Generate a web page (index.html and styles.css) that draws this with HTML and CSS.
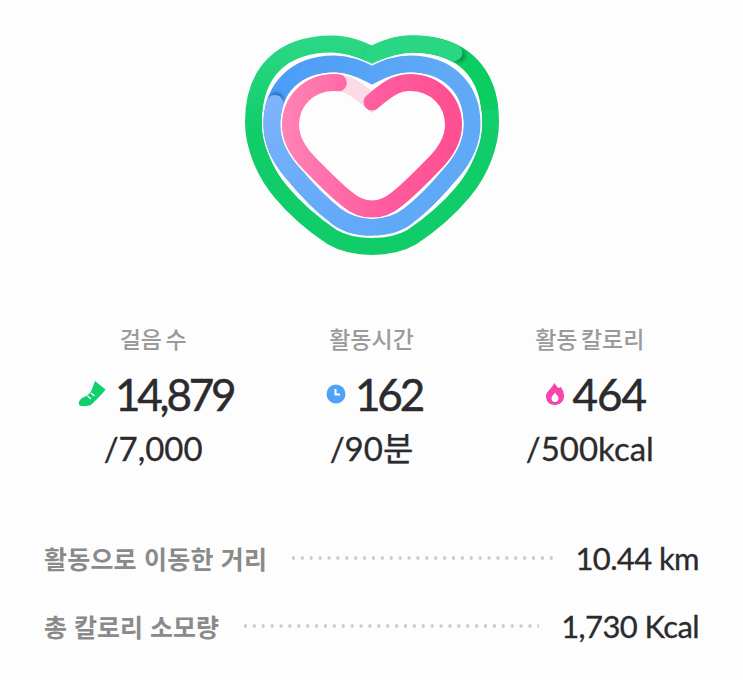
FILE: index.html
```html
<!DOCTYPE html>
<html lang="ko">
<head>
<meta charset="utf-8">
<title>활동</title>
<link rel="stylesheet" href="styles.css">
</head>
<body>
<main class="page">
  <div class="heart-wrap">
    <svg class="heart" viewBox="232 24 280 244" width="280" height="244" aria-hidden="true">
      <defs>
        <linearGradient id="greenTop" gradientUnits="userSpaceOnUse" x1="0" y1="40" x2="0" y2="130">
          <stop offset="0" stop-color="#2bd785"/><stop offset="1" stop-color="#10cd69"/>
        </linearGradient>
        <linearGradient id="blueBase" gradientUnits="userSpaceOnUse" x1="270" y1="60" x2="420" y2="120">
          <stop offset="0" stop-color="#4a9cf6"/><stop offset="1" stop-color="#60a9f7"/>
        </linearGradient>
        <linearGradient id="blueLight" gradientUnits="userSpaceOnUse" x1="0" y1="90" x2="0" y2="225">
          <stop offset="0" stop-color="#80b4fa"/><stop offset="1" stop-color="#62a9f8"/>
        </linearGradient>
        <linearGradient id="pinkGrad" gradientUnits="userSpaceOnUse" x1="285" y1="0" x2="455" y2="0">
          <stop offset="0" stop-color="#ff82b4"/><stop offset="0.55" stop-color="#ff5c9f"/><stop offset="1" stop-color="#fd4f92"/>
        </linearGradient>
        <path id="greenPath" pathLength="100" d="M372 55 C384 49 396 44 412 44 C462 44 490.5 72 490.5 122 C490.5 145 480 172 463 192 C448 210 430 225 412 237 C400 244 386 246.5 372 246.5 C358 246.5 344 244 332 237 C314 225 296 210 281 192 C264 172 253.5 145 253.5 122 C253.5 72 282 44 332 44 C348 44 360 49 372 55 Z"/>
        <path id="bluePath" pathLength="100" d="M372 75 C385 68 397 64 410 64 C448 64 472 88 472 124 C472 142 464 158 452 172 C438 189 424 204 408 216 C398 224 385 227 372 227 C359 227 346 224 336 216 C320 204 306 189 292 172 C280 158 272 142 272 124 C272 88 296 64 334 64 C347 64 359 68 372 75 Z"/>
        <path id="pinkPath" pathLength="100" d="M372 102 C385 91 395 82.5 410 82.5 C435 82.5 453.5 101 453.5 125 C453.5 140 445 153 434 164 C422 176 410 189 397 199 C389 206 381 209 372 209 C363 209 355 206 347 199 C334 189 322 176 310 164 C299 153 290.5 140 290.5 125 C290.5 101 309 82.5 334 82.5 C349 82.5 359 91 372 102 Z"/>
      </defs>
      <use href="#greenPath" class="ring ring-green"/>
      <use href="#greenPath" class="ring ring-green-solid"/>
      <use href="#greenPath" class="cap-shadow shadow-green"/>
      <use href="#greenPath" class="ring ring-green-cap"/>

      <use href="#bluePath" class="halo"/>
      <use href="#bluePath" class="ring ring-blue"/>
      <use href="#bluePath" class="cap-shadow shadow-blue"/>
      <use href="#bluePath" class="ring ring-blue-cap"/>

      <use href="#pinkPath" class="halo"/>
      <use href="#pinkPath" class="ring ring-pink-bg"/>
      <use href="#pinkPath" class="ring ring-pink"/>
    </svg>
  </div>

  <section class="stats">
    <div class="stat">
      <div class="stat-label">걸음 수</div>
      <div class="stat-value">
        <svg class="icon icon-shoe" viewBox="0 0 28 26" width="28" height="26" aria-hidden="true">
          <path class="shoe-fill" d="M17 0 L27.500 8.500 Q25 12 22 15 L15 22 Q13 25 8 25 L4 25 Q0 25 1 21 Q2 17.500 6 16 Q12 14 14 8 Z"/>
          <path class="shoe-lace" d="M9.500 15 L13 18 M13 12 L16.500 15"/>
        </svg>
        <span class="num">14,879</span>
      </div>
      <div class="stat-goal">/7,000</div>
    </div>
    <div class="stat">
      <div class="stat-label">활동시간</div>
      <div class="stat-value">
        <svg class="icon icon-clock" viewBox="0 0 20 20" width="20" height="20" aria-hidden="true">
          <circle class="clock-face" cx="10" cy="10" r="9.500"/>
          <path class="clock-hand" d="M9.500 5 V10.500 H14"/>
        </svg>
        <span class="num">162</span>
      </div>
      <div class="stat-goal">/90분</div>
    </div>
    <div class="stat">
      <div class="stat-label">활동 칼로리</div>
      <div class="stat-value stat-value-shift">
        <svg class="icon icon-flame" viewBox="0 0 18 22" width="18" height="22" aria-hidden="true">
          <path class="flame-fill" d="M8.500 0 C10 3 12 5 13.500 5 C13.800 4.500 14 4.200 14.300 3.800 C16.500 6 18 9 18 13 C18 18.500 14 22 9 22 C4 22 0 18.500 0 13.500 C0 8 5.500 6 8.500 0 Z"/>
          <path class="flame-core" d="M9 9.500 C10.500 12 12.500 13 12.500 15.500 C12.500 17.500 11 19 9 19 C7 19 5.500 17.500 5.500 15.500 C5.500 13 7.500 12 9 9.500 Z"/>
        </svg>
        <span class="num num-wide">464</span>
      </div>
      <div class="stat-goal">/500kcal</div>
    </div>
  </section>

  <section class="rows">
    <div class="row">
      <span class="row-label row-label-wide">활동으로 이동한 거리</span>
      <span class="dots"></span>
      <span class="row-value">10.44 km</span>
    </div>
    <div class="row">
      <span class="row-label">총 칼로리 소모량</span>
      <span class="dots"></span>
      <span class="row-value">1,730 Kcal</span>
    </div>
  </section>
</main>
</body>
</html>
```
FILE: styles.css
```css
html, body {
  margin: 0;
  padding: 0;
  background: #fdfdfd;
}
body {
  font-family: "Lato", "Noto Sans CJK KR", sans-serif;
  color: #2b2b2d;
  width: 743px;
  height: 680px;
  overflow: hidden;
}
.page {
  display: flex;
  flex-direction: column;
  padding: 24px 44px 0;
}
.heart-wrap {
  display: flex;
  justify-content: center;
  height: 244px;
}
.heart { display: block; }
.ring {
  fill: none;
  stroke-width: 17px;
  stroke-linejoin: miter;
  stroke-linecap: round;
}
.halo {
  fill: none;
  stroke: #ffffff;
  stroke-width: 20px;
}
.ring-green { stroke: url(#greenTop); }
.ring-green-solid {
  stroke: #0bcd62;
  stroke-linecap: butt;
  stroke-dasharray: 14 200;
  stroke-dashoffset: -8;
}
.ring-green-cap {
  stroke: #29d683;
  stroke-dasharray: 12 200;
}
.ring-blue { stroke: url(#blueBase); }
.ring-blue-cap {
  stroke: url(#blueLight);
  stroke-dasharray: 30 200;
  stroke-dashoffset: -50;
}
.ring-pink-bg { stroke: #fbdbe6; }
.ring-pink {
  stroke: url(#pinkGrad);
  stroke-dasharray: 91.600 200;
}
.cap-shadow {
  fill: none;
  stroke-width: 14px;
  stroke-linecap: round;
  filter: blur(1.500px);
}
.shadow-green { stroke: #079a4c; stroke-dasharray: 12.800 200; }
.shadow-blue {
  stroke: #2a74c4;
  stroke-dasharray: 30 200;
  stroke-dashoffset: -50.800;
}

.stats {
  display: grid;
  grid-template-columns: repeat(3, 1fr);
  margin-top: 50px;
}
.stat {
  display: flex;
  flex-direction: column;
  align-items: center;
}
.stat-label {
  font-family: "Noto Sans CJK KR", sans-serif;
  font-size: 23px;
  font-weight: 500;
  word-spacing: -3px;
  line-height: 40px;
  color: #9a9a9a;
}
.stat-value {
  display: flex;
  align-items: center;
  gap: 9px;
  height: 64px;
  margin-top: 4px;
  margin-left: 5px;
}
.stat-value-shift { margin-left: 12px; }
.num {
  font-size: 44px;
  letter-spacing: -3.200px;
  line-height: 64px;
  -webkit-text-stroke: 0.5px #2b2b2d;
}
.num-wide { letter-spacing: -1px; }
.icon { display: block; flex: none; }
.shoe-fill { fill: #12cf6e; }
.shoe-lace { fill: none; stroke: #fdfdfd; stroke-width: 1.500px; }
.clock-face { fill: #4fa3f7; }
.clock-hand { fill: none; stroke: #fff; stroke-width: 2px; }
.flame-fill { fill: #f745ac; }
.flame-core { fill: #fff; }
.stat-goal {
  font-size: 33px;
  line-height: 44px;
  color: #2b2b2d;
  -webkit-text-stroke: 0.3px #2b2b2d;
}

.rows {
  display: flex;
  flex-direction: column;
  gap: 28px;
  margin-top: 68px;
}
.row {
  display: flex;
  align-items: center;
  height: 40px;
}
.row-label {
  font-family: "Noto Sans CJK KR", sans-serif;
  font-size: 25px;
  font-weight: 700;
  color: #8a8a8a;
  white-space: nowrap;
}
.row-label-wide { letter-spacing: 0.200px; }
.dots {
  flex: 1;
  height: 4px;
  margin: 0 22px;
  background-image: radial-gradient(circle, #cccccc 1.600px, transparent 2px);
  background-size: 8.900px 4px;
  background-repeat: repeat-x;
}
.row-value {
  font-size: 31px;
  letter-spacing: -0.600px;
  white-space: nowrap;
  -webkit-text-stroke: 0.3px #2b2b2d;
}
```
